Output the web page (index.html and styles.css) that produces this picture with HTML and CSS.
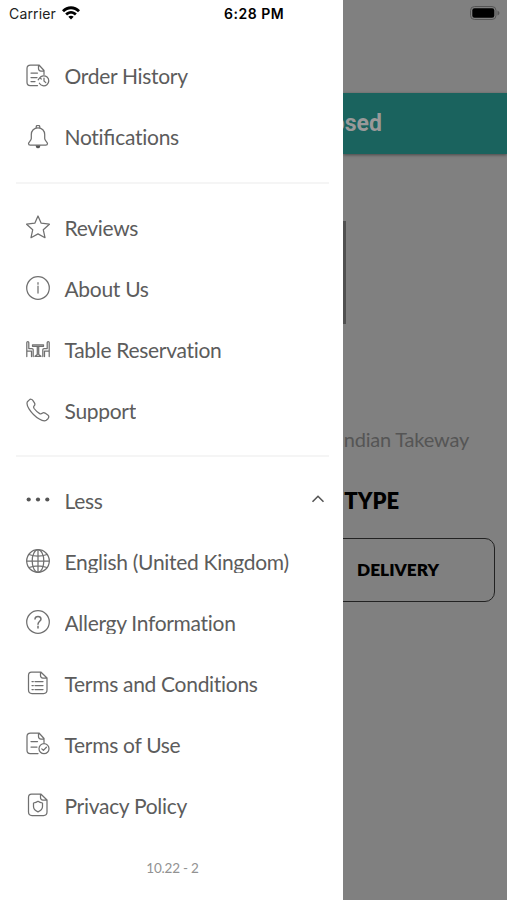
FILE: index.html
```html
<!DOCTYPE html>
<html lang="en">
<head>
<meta charset="utf-8">
<title>Menu</title>
<link rel="stylesheet" href="styles.css">
</head>
<body>
<div class="screen">
  <aside class="drawer">
    <header class="status">
      <span class="carrier">Carrier</span>
      <svg class="wifi" width="18" height="14" viewBox="0 0 18 14"><path d="M0 4.2C5-1.2 13-1.2 18 4.2L16 6.3C12 2.2 6 2.2 2 6.3ZM3.2 7.5C6.5 4.1 11.5 4.1 14.8 7.5L12.9 9.5C10.5 7.2 7.5 7.2 5.1 9.5ZM6.3 10.7C7.8 9.3 10.2 9.3 11.7 10.7L9 13.6Z"/></svg>
      <span class="time">6:28 PM</span>
    </header>
    <nav class="menu">
      <a class="row raised"><svg class="icon" viewBox="0 0 24 24"><path d="M11.5 21.5H4.2Q1 21.5 1 18.2V4.5Q1 1 4.500 1H13L18 6.500V10.500M12.500 1V4.500Q12.500 7 15 7H18M5 9H11.500M5 13.500H11M5 17.500H9"/><path d="M13.500 14.200A5 5 0 1 1 13.400 19.200M12.200 15.800 13.500 14 15.400 15M18 14V17L19.800 18.600"/></svg><span class="label">Order History</span></a>
      <a class="row raised"><svg class="icon" viewBox="0 0 24 24"><path d="M10.2 3V2.1A1.8 1.8 0 0 1 13.8 2.1V3M12 2.8C8 2.8 5.3 5.8 5.3 9.6V13.6C5.3 15.5 2.500 17 2.500 18.6Q2.500 20.2 4.2 20.2H19.8Q21.500 20.2 21.500 18.6C21.500 17 18.7 15.500 18.7 13.6V9.6C18.7 5.8 16 2.8 12 2.8Z"/><path class="fill" d="M9.5 20.4H14.5Q14 23.3 12 23.3T9.5 20.4Z"/></svg><span class="label">Noti<span class="lig">fi</span>cations</span></a>
      <hr class="rule">
      <a class="row"><svg class="icon" viewBox="0 0 24 24"><path d="M12 1 15.2 8.2 23.4 9.2 17.3 14.8 19 22.7 12 18.9 5 22.7 6.7 14.8.6 9.2 8.8 8.2Z"/></svg><span class="label">Reviews</span></a>
      <a class="row"><svg class="icon" viewBox="0 0 24 24"><circle cx="12" cy="12" r="11.3"/><path d="M12 10V17M12 6.7V8.2"/></svg><span class="label">About Us</span></a>
      <a class="row"><svg class="icon" viewBox="0 0 24 24"><path d="M.8 19.5V5.5Q.8 4.5 1.8 4.5T2.8 5.5V11.5H6Q7.2 11.500 7.2 12.7V19.5M2.8 14H5.500V19.5M.8 14H3M23.2 19.500V5.500Q23.2 4.500 22.2 4.500T21.2 5.500V11.500H18Q16.8 11.500 16.8 12.7V19.500M21.2 14H18.500V19.500M23.2 14H21"/><path d="M6.500 7.800H17.500V9.300H6.500ZM11.300 9.300V17.500L9 19.300H15L12.700 17.500V9.300"/></svg><span class="label">Table Reservation</span></a>
      <a class="row"><svg class="icon" viewBox="0 0 24 24"><path d="M1.4 3.8 3.1 2.1Q5 .3 6.8 2.3L8.6 5.1Q9.4 6.6 8 8 7.200 9.100 8.100 10.500 10.300 13.500 13.700 15.600 14.900 16.300 16.2 15.300 17.600 14.200 19 15.100L21.8 17Q23.7 18.500 22 20.7L20.3 22.3Q17.8 23.8 13.3 21 7.2 17.4 3 10.8.1 6.4 1.4 3.8Z"/></svg><span class="label clipped">Support</span></a>
      <hr class="rule">
      <a class="row"><svg class="icon" viewBox="0 0 24 24"><g class="fill"><circle cx="2.700" cy="11.500" r="2.1"/><circle cx="12" cy="11.500" r="2.1"/><circle cx="21.300" cy="11.500" r="2.1"/></g></svg><span class="label">Less</span><svg class="chevron" width="14" height="10" viewBox="0 0 14 10"><path d="M1.5 7.8 7 2.3 12.5 7.8"/></svg></a>
      <a class="row"><svg class="icon" viewBox="0 0 24 24"><circle cx="12" cy="12" r="11.3"/><ellipse cx="12" cy="12" rx="5.8" ry="11.3"/><path d="M12 .7V23.3M.7 12H23.3M3 5.5Q12 8.8 21 5.5M3 18.5Q12 15.2 21 18.5"/></svg><span class="label clipped">English (United Kingdom)</span></a>
      <a class="row"><svg class="icon" viewBox="0 0 24 24"><circle cx="12" cy="12" r="11.3"/><path class="bold" d="M9 9Q9.2 6.5 12 6.5T15 9C15 11.3 12 11.2 12 14.2M12 16.3V18"/></svg><span class="label clipped">Allergy Information</span></a>
      <a class="row"><svg class="icon" viewBox="0 0 24 24"><path d="M5.5 1H14.8L21 7V19Q21 22.5 17.5 22.5H6Q2.5 22.5 2.5 19V4.5Q2.5 1 5.5 1ZM14.5 1V4.5Q14.5 7 17 7H21M9 10.5H17M9 14.5H17M9 18.5H17M6 10.5H7.3M6 14.5H7.3M6 18.5H7.3"/></svg><span class="label">Terms and Conditions</span></a>
      <a class="row"><svg class="icon" viewBox="0 0 24 24"><path d="M12 21.5H4.2Q1 21.5 1 18.2V4.5Q1 1 4.5 1H13L18 6.5V10.5M12.5 1V4.5Q12.5 7 15 7H18M5 9.5H11.5M5 15H11"/><circle cx="18" cy="16.7" r="5"/><path d="M15.8 16.9 17.4 18.4 20.4 15.2"/></svg><span class="label">Terms of Use</span></a>
      <a class="row"><svg class="icon" viewBox="0 0 24 24"><path d="M5.5 1H14.8L21 7V19Q21 22.5 17.5 22.5H6Q2.5 22.5 2.5 19V4.5Q2.5 1 5.5 1ZM14.5 1V4.5Q14.5 7 17 7H21M12 8.3Q14 9.8 16.5 10V13.5Q16.5 17 12 18.8 7.5 17 7.5 13.5V10Q10 9.8 12 8.3Z"/></svg><span class="label">Privacy Policy</span></a>
    </nav>
    <footer class="version">10.22 - 2</footer>
  </aside>
  <main class="page">
    <div class="topbar"><svg width="30" height="14" viewBox="0 0 30 14"><rect class="shell" x=".5" y=".5" width="25.500" height="13" rx="4"/><rect x="2.300" y="2.300" width="22" height="9.500" rx="2.200"/><path class="tip" d="M27.500 4.500Q29.500 5.500 29.500 7T27.500 9.500Z"/></svg></div>
    <div class="banner"><span>Closed</span></div>
    <div class="logo-edge"></div>
    <p class="cuisine"><span>Indian Takeway</span></p>
    <h2 class="heading"><span>ORDER TYPE</span></h2>
    <div class="option"><span>DELIVERY</span></div>
  </main>
</div>
</body>
</html>
```
FILE: styles.css
```css
* { box-sizing: border-box; }
body { margin: 0; font-family: Lato, sans-serif; }
.screen { display: flex; width: 507px; height: 900px; overflow: hidden; background: #808080; }
.drawer { width: 343px; height: 900px; flex: none; background: #fff; display: flex; flex-direction: column; }
.status { height: 46px; display: flex; align-items: flex-start; padding: 5px 0 0 9px; font: 14px/18px Inter, sans-serif; color: #222; }
.carrier { width: 53px; font-size: 14px; letter-spacing: .15px; white-space: nowrap; }
.wifi { margin-top: 1px; fill: #000; }
.time { margin-left: 144px; font-weight: 600; letter-spacing: .5px; color: #000; white-space: nowrap; }
.menu { display: flex; flex-direction: column; }
.row { height: 61px; display: flex; align-items: center; padding: 0 18px 0 25.5px; }
.icon { width: 24px; height: 24px; margin-right: 15px; margin-top: -1px; flex: none; fill: none; stroke: #707070; stroke-width: 1.25; stroke-linejoin: round; stroke-linecap: round; }
.icon .fill { fill: #555; stroke: none; }
.icon .bold { stroke-width: 1.5; }
.label { font-size: 21px; line-height: 24px; letter-spacing: -.3px; color: #5c5c5c; white-space: nowrap; }
.lig { letter-spacing: 0; }
.raised .label { margin-bottom: 1px; }
.clipped { overflow: hidden; height: 23px; margin-bottom: 1px; }
.chevron { margin: -3px 0 0 auto; fill: none; stroke: #555; stroke-width: 1.6; }
.rule { width: 313px; height: 2px; border: 0; margin: 14px 0 13px 16px; background: #f5f5f5; }
.version { margin-top: 23px; padding-left: 2px; text-align: center; font-size: 13.5px; letter-spacing: -.2px; line-height: 18px; color: #929292; }
.page { width: 164px; display: flex; flex-direction: column; overflow: hidden; }
.topbar { height: 93px; padding: 6px 7px 0 0; display: flex; justify-content: flex-end; }
.shell { fill: none; stroke: #555; }
.tip { fill: #555; }
.banner { height: 61px; padding-right: 125px; display: flex; align-items: center; justify-content: flex-end; background: #1a635e; box-shadow: 0 1px 3px rgba(0,0,0,.45); color: #999; font: 700 23px/24px Roboto, sans-serif; }
.logo-edge { width: 3px; height: 103px; margin-top: 67px; background: #505050; }
.cuisine { height: 24px; margin: 103px 38px 0 0; display: flex; justify-content: flex-end; font-size: 20px; letter-spacing: -.2px; line-height: 24px; color: #555; white-space: nowrap; }
.heading { height: 28px; margin: 36px 108px 0 0; display: flex; justify-content: flex-end; font-size: 22px; line-height: 28px; font-weight: 800; color: #000; white-space: nowrap; }
.option { height: 64px; margin: 23px 12px 0 -20px; padding: 0 55px 1px 0; display: flex; align-items: center; justify-content: flex-end; border: 1.5px solid #222; border-radius: 10px; font-size: 17.3px; font-weight: 800; color: #000; }
```
